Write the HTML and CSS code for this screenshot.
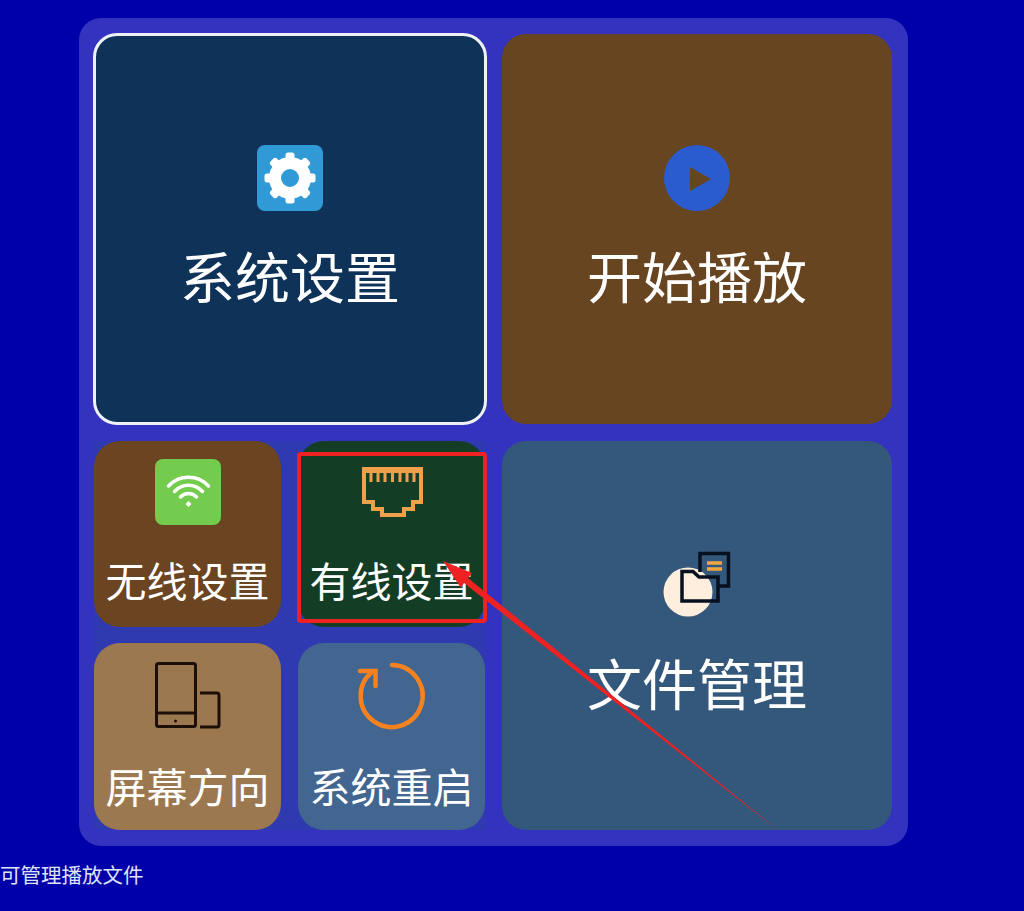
FILE: index.html
```html
<!DOCTYPE html>
<html lang="zh-CN">
<head>
    <meta charset="UTF-8">
    <meta name="viewport" content="width=device-width, initial-scale=1.0">
    <title>系统设置</title>
    <link rel="stylesheet" href="styles.css">
</head>
<body>
    <div class="panel">
        <div class="tile big tile-settings">
            <svg class="icon" viewBox="0 0 66 66">
                <rect width="66" height="66" rx="8" fill="#2f9ad6"/>
                <g fill="#fff">
                    <rect x="28.500" y="7.500" width="9" height="12" rx="2.500"/>
                    <rect x="28.500" y="7.500" width="9" height="12" rx="2.500" transform="rotate(45 33 33)"/>
                    <rect x="28.500" y="7.500" width="9" height="12" rx="2.500" transform="rotate(90 33 33)"/>
                    <rect x="28.500" y="7.500" width="9" height="12" rx="2.500" transform="rotate(135 33 33)"/>
                    <rect x="28.500" y="7.500" width="9" height="12" rx="2.500" transform="rotate(180 33 33)"/>
                    <rect x="28.500" y="7.500" width="9" height="12" rx="2.500" transform="rotate(225 33 33)"/>
                    <rect x="28.500" y="7.500" width="9" height="12" rx="2.500" transform="rotate(270 33 33)"/>
                    <rect x="28.500" y="7.500" width="9" height="12" rx="2.500" transform="rotate(315 33 33)"/>
                </g>
                <circle cx="33" cy="33" r="15" fill="none" stroke="#fff" stroke-width="12"/>
            </svg>
            <span>系统设置</span>
        </div>

        <div class="tile big tile-play">
            <svg class="icon" viewBox="0 0 66 66">
                <circle cx="33" cy="33" r="33" fill="#2a5cd0"/>
                <path d="M26 22 L47 34 L26 46 Z" fill="#674520"/>
            </svg>
            <span>开始播放</span>
        </div>

        <div class="sub-grid">
            <div class="tile small tile-wifi">
                <svg class="icon" viewBox="0 0 66 66">
                    <rect width="66" height="66" rx="8" fill="#74cc4f"/>
                    <g fill="none" stroke="#fff" stroke-width="3.500" stroke-linecap="round">
                        <path d="M13.500 27 A27 27 0 0 1 53.500 27"/>
                        <path d="M19.500 32.500 A19 19 0 0 1 47.500 32.500"/>
                        <path d="M25.500 38 A11 11 0 0 1 41.500 38"/>
                    </g>
                    <path d="M33.500 42 L36.500 45 L33.500 48 L30.500 45 Z" fill="#fff"/>
                </svg>
                <span>无线设置</span>
            </div>

            <div class="tile small tile-wired">
                <svg class="icon" viewBox="0 0 66 66">
                    <g fill="none" stroke="#f0a04b" stroke-width="4">
                        <path d="M5 10 H62 V43 H54 V50 H45 V56 H23 V50 H14 V43 H5 Z"/>
                        <path d="M5 11.500 H62" stroke-width="5"/>
                        <path d="M12 12 V23 M19 12 V23 M26 12 V23 M33.500 12 V23 M41 12 V23 M48 12 V23 M55 12 V23" stroke-width="3"/>
                    </g>
                </svg>
                <span>有线设置</span>
            </div>

            <div class="tile small low tile-screen">
                <svg class="icon" viewBox="0 0 66 66">
                    <g fill="none" stroke="#1b0f08" stroke-width="3">
                        <rect x="1.500" y="1.500" width="39" height="63" rx="2"/>
                        <path d="M1.500 51 H40.500"/>
                        <path d="M45 31 H62 Q64 31 64 33 V63 Q64 65 62 65 H45"/>
                    </g>
                    <circle cx="20.500" cy="59" r="1.500" fill="#1b0f08"/>
                </svg>
                <span>屏幕方向</span>
            </div>

            <div class="tile small low tile-reboot">
                <svg class="icon" viewBox="0 0 66 66">
                    <g fill="none" stroke="#f5811f" stroke-width="4.500" stroke-linecap="round">
                        <path d="M33 3 A31 31 0 1 1 13 10"/>
                        <path d="M1 9 H16.500 V24"/>
                    </g>
                </svg>
                <span>系统重启</span>
            </div>
        </div>

        <div class="tile big tile-files">
            <svg class="icon" viewBox="0 0 66 66">
                <circle cx="24" cy="40" r="24.500" fill="#fdeedd"/>
                <path d="M36 20 V1.500 H64.500 V34 H55" fill="none" stroke="#07101f" stroke-width="3.500"/>
                <path d="M43 11 H58 M43 17 H58" stroke="#f0a83c" stroke-width="3.500"/>
                <path d="M18 19.500 H29 L35 25 H54 V49 H18 Z" fill="none" stroke="#07101f" stroke-width="3.500"/>
            </svg>
            <span>文件管理</span>
        </div>

        <!-- annotation drawn over the tiles -->
        <div class="mark-box"></div>
        <svg class="mark-arrow" viewBox="0 0 1024 911">
            <polygon points="443,561 472,573 468,578 780,832 464,583 461,588" fill="#ee2222"/>
        </svg>
    </div>

    <p class="caption">可管理播放文件</p>
</body>
</html>
```

FILE: styles.css
```css
* {
    box-sizing: border-box;
}
body {
    margin: 0;
    height: 911px;
    overflow: hidden;
    background: #0000aa;
    font-family: "Noto Sans CJK SC", "Noto Sans", sans-serif;
    color: #fff;
}
.panel {
    display: grid;
    grid-template-columns: 392px 390px;
    grid-template-rows: 390px 389px;
    gap: 17px 16px;
    width: 829px;
    height: 828px;
    margin: 18px 0 0 79px;
    padding: 16px 16px 16px 15px;
    background: #3333bf;
    border-radius: 22px;
}
.sub-grid {
    display: grid;
    grid-template-columns: 187px 187px;
    grid-template-rows: 186px 187px;
    gap: 16px 17px;
    background: #2f3ab0;
}
.tile {
    display: flex;
    flex-direction: column;
    align-items: center;
    white-space: nowrap;
}
.tile svg {
    display: block;
    overflow: visible;
}
.icon {
    width: 66px;
    height: 66px;
    flex: none;
}
.big {
    justify-content: center;
    border-radius: 24px;
    font-size: 55px;
    line-height: 78px;
}
.big .icon {
    margin-bottom: 24px;
}
.small {
    padding-top: 18px;
    border-radius: 26px;
    font-size: 41px;
    line-height: 50px;
}
.small .icon {
    margin-bottom: 29px;
}
.small.low {
    padding-top: 19px;
}
.small.low .icon {
    margin-bottom: 32px;
}
.tile-settings {
    margin: -1px;
    background: #0f3259;
    border: 3px solid #eef2f8;
}
.tile-play {
    background: #674520;
}
.tile-files {
    background: #34577c;
}
.tile-wifi {
    background: #6b4422;
}
.tile-wired {
    background: #143d26;
}
.tile-screen {
    background: #9c7851;
}
.tile-reboot {
    background: #426690;
}
.mark-box {
    position: absolute;
    left: 297px;
    top: 452px;
    width: 190px;
    height: 171px;
    border: 4px solid #ee2222;
    border-radius: 4px;
}
.mark-arrow {
    position: absolute;
    left: 0;
    top: 0;
    width: 1024px;
    height: 911px;
}
.caption {
    margin: 14px 0 0;
    font-size: 20.5px;
    line-height: 28px;
    color: #dfe3f5;
}
```
